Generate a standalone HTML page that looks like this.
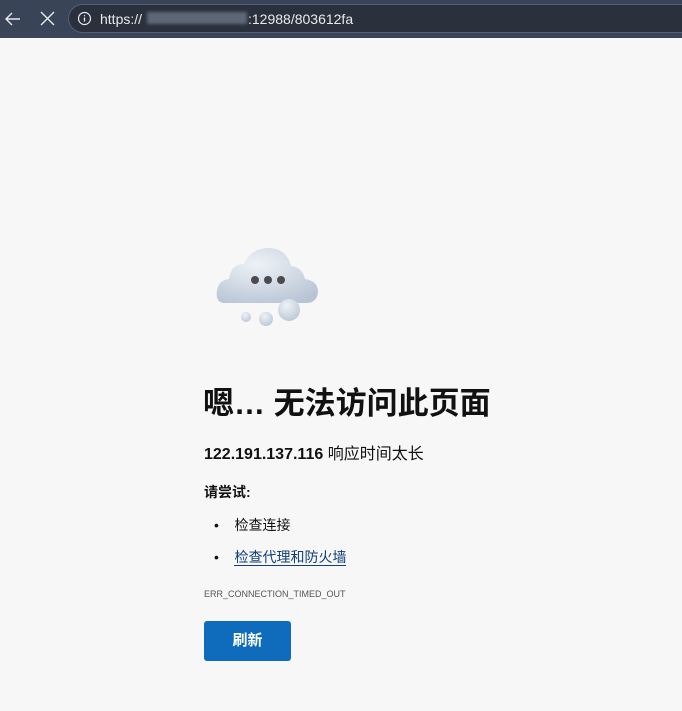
<!DOCTYPE html>
<html><head><meta charset="utf-8"><style>
body{margin:0;width:682px;height:711px;background:#f7f7f7;font-family:"Liberation Sans","Noto Sans CJK SC",sans-serif;overflow:hidden;position:relative}
.bar{position:absolute;left:0;top:0;width:682px;height:38px;background:#3a4458}
.url{position:absolute;left:68px;top:4px;width:640px;height:29px;border-radius:15px;background:#2a313d;border:1px solid #556074;box-sizing:border-box}
.t{position:absolute;color:#111}
</style></head><body>
<div class="bar">
<svg style="position:absolute;left:4px;top:10px" width="18" height="18" viewBox="0 0 18 18"><path d="M16 9H2M8 3L2 9l6 6" stroke="#e8eaed" stroke-width="1.4" fill="none"/></svg>
<svg style="position:absolute;left:40px;top:11px" width="15" height="15" viewBox="0 0 15 15"><path d="M1 1L14 14M14 1L1 14" stroke="#e8eaed" stroke-width="1.4"/></svg>
<div class="url">
<svg style="position:absolute;left:8px;top:6px" width="15" height="15" viewBox="0 0 15 15"><circle cx="7.5" cy="7.5" r="6" stroke="#e8eaed" stroke-width="1.2" fill="none"/><path d="M7.5 6.5v4M7.5 4.3v1" stroke="#e8eaed" stroke-width="1.3"/></svg>
<span style="position:absolute;left:31px;top:6px;color:#e8eaed;font-size:14px">https://</span>
<div style="position:absolute;left:78px;top:7px;width:100px;height:12px;background:#6b7584;opacity:.8;filter:blur(1.5px)"></div>
<span style="position:absolute;left:179px;top:6px;color:#e8eaed;font-size:14px">:12988/803612fa</span>
</div></div>
<svg style="position:absolute;left:210px;top:240px" width="120" height="95" viewBox="210 240 120 95">
<defs><radialGradient id="g" cx="40%" cy="30%" r="80%"><stop offset="0" stop-color="#eef2f7"/><stop offset="1" stop-color="#b7c4d4"/></radialGradient></defs>
<path d="M225 303 Q215 303 217 290 Q219 280 229 279 Q231 264 244 264 Q251 248 269 248 Q287 249 291 266 Q302 267 305 279 Q318 281 318 292 Q317 303 306 303 Z" fill="url(#g)"/>
<circle cx="255" cy="280" r="4" fill="#4b4b4f"/><circle cx="268" cy="280" r="4" fill="#4b4b4f"/><circle cx="281" cy="280" r="4" fill="#4b4b4f"/>
<circle cx="246" cy="317" r="5" fill="url(#g)"/><circle cx="266" cy="319" r="7" fill="url(#g)"/><circle cx="289" cy="310" r="11" fill="url(#g)"/>
</svg>
<div class="t" style="left:203px;top:378px;font-size:31px;font-weight:bold">嗯… 无法访问此页面</div>
<div class="t" style="left:204px;top:440px;font-size:16px;font-weight:bold">122.191.137.116 <span style="font-weight:normal">响应时间太长</span></div>
<div class="t" style="left:204px;top:482px;font-size:14px;font-weight:bold">请尝试:</div>
<div class="t" style="left:214px;top:515px;font-size:14px">•&nbsp;&nbsp;&nbsp;&nbsp;检查连接</div>
<div class="t" style="left:214px;top:547px;font-size:14px">•&nbsp;&nbsp;&nbsp;&nbsp;<span style="color:#0f3e78;border-bottom:1px solid #0f3e78">检查代理和防火墙</span></div>
<div class="t" style="left:204px;top:589px;font-size:9px;color:#555">ERR_CONNECTION_TIMED_OUT</div>
<div style="position:absolute;left:204px;top:621px;width:87px;height:40px;background:#0f6cbd;border-radius:3px;color:#fff;font-size:15px;font-weight:bold;text-align:center;line-height:40px">刷新</div>
</body></html>
